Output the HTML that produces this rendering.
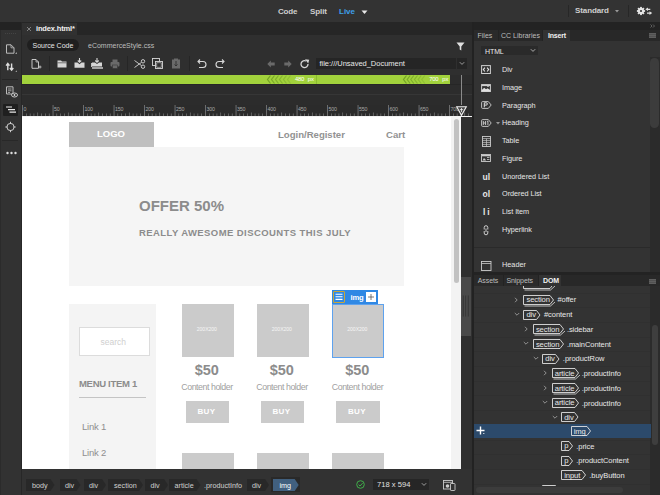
<!DOCTYPE html>
<html><head><meta charset="utf-8">
<style>
*{margin:0;padding:0;box-sizing:border-box}
html,body{width:660px;height:495px;overflow:hidden;background:#232323;font-family:"Liberation Sans",sans-serif;color:#ddd}
.a{position:absolute;overflow:visible}
.t{position:absolute;white-space:nowrap;line-height:1}
</style></head><body>
<div class="a" style="left:0;top:0;width:660px;height:22px;background:#333"></div>
<div class="t" style="left:278px;top:8.2px;font-size:8px;font-weight:bold;color:#cfcfcf;letter-spacing:-0.2px">Code</div>
<div class="t" style="left:310px;top:8.2px;font-size:8px;font-weight:bold;color:#cfcfcf;letter-spacing:-0.1px">Split</div>
<div class="t" style="left:339px;top:8.2px;font-size:8px;font-weight:bold;color:#3ea0ea;">Live</div>
<svg class="a" style="left:361px;top:10.2px;" width="7" height="5" viewBox="0 0 7 5"><path d="M0.5 0.5 L6.5 0.5 L3.5 4 Z" fill="#e8e8e8"/></svg>
<div class="a" style="left:568px;top:5px;width:1px;height:12px;background:#272727"></div>
<div class="t" style="left:575px;top:7px;font-size:8px;font-weight:bold;color:#cfcfcf;letter-spacing:-0.1px">Standard</div>
<svg class="a" style="left:615px;top:10px;" width="4" height="3" viewBox="0 0 4 3"><path d="M0 0 L4 0 L2 2.5 Z" fill="#999"/></svg>
<div class="a" style="left:628px;top:5px;width:1px;height:12px;background:#272727"></div>
<svg class="a" style="left:636.8px;top:6.9px;" width="16" height="9" viewBox="0 0 16 9"><g fill="#e6e6e6"><rect x="3.1" y="-0.1" width="1.8" height="8.2" transform="rotate(0 4 4)"/><rect x="3.1" y="-0.1" width="1.8" height="8.2" transform="rotate(45 4 4)"/><rect x="3.1" y="-0.1" width="1.8" height="8.2" transform="rotate(90 4 4)"/><rect x="3.1" y="-0.1" width="1.8" height="8.2" transform="rotate(135 4 4)"/><circle cx="4" cy="4" r="3"/></g><circle cx="4" cy="4" r="1.1" fill="#333"/>
<path d="M8.3 2.3 L11 0.5 V1.7 H13.3 V2.9 H11 V4.1 Z" fill="#e0e0e0"/><path d="M15.2 6.1 L12.5 4.3 V5.5 H10 V6.7 H12.5 V7.9 Z" fill="#e0e0e0"/></svg>
<div class="a" style="left:0;top:30px;width:20.5px;height:465px;background:#323232"></div>
<div class="a" style="left:0;top:30px;width:1px;height:465px;background:#2b2b2b"></div>
<div class="a" style="left:20.5px;top:22px;width:1.5px;height:473px;background:#272727"></div>
<svg class="a" style="left:5px;top:33px;" width="11" height="2" viewBox="0 0 11 2"><rect x="0" y="0" width="1" height="1" fill="#444"/><rect x="2" y="0" width="1" height="1" fill="#444"/><rect x="4" y="0" width="1" height="1" fill="#444"/><rect x="6" y="0" width="1" height="1" fill="#444"/><rect x="8" y="0" width="1" height="1" fill="#444"/><rect x="10" y="0" width="1" height="1" fill="#444"/></svg>
<svg class="a" style="left:5px;top:44px;" width="12" height="12" viewBox="0 0 12 12"><path d="M1.5 0.8 H6 L9 3.8 V9.2 H1.5 Z" fill="none" stroke="#bbb" stroke-width="1"/><path d="M6 0.8 V3.8 H9" fill="none" stroke="#bbb" stroke-width="0.8"/><path d="M10 10 L12 10 L12 8 Z" fill="#999"/></svg>
<svg class="a" style="left:5px;top:62px;" width="12" height="12" viewBox="0 0 12 12"><path d="M2.8 8.2 V2.2 M1.1 3.6 L2.8 1.4 L4.5 3.6" stroke="#ddd" stroke-width="1.4" fill="none"/><path d="M6.6 1.4 V7.4 M4.9 6 L6.6 8.2 L8.3 6" stroke="#ddd" stroke-width="1.4" fill="none"/><path d="M10.2 10 L12 10 L12 8.2 Z" fill="#999"/></svg>
<div class="a" style="left:2px;top:79px;width:16px;height:1px;background:#262626"></div>
<svg class="a" style="left:5px;top:86px;" width="13" height="12" viewBox="0 0 13 12"><path d="M1.5 0.8 H8 V8 H1.5 Z" fill="none" stroke="#bbb" stroke-width="1"/><path d="M3 3 H6.5 M3 4.8 H6.5 M3 6.5 H5" stroke="#bbb" stroke-width="0.8"/><ellipse cx="9.5" cy="9" rx="3" ry="2" fill="#2d2d2d" stroke="#ddd" stroke-width="0.9"/><circle cx="9.5" cy="9" r="0.9" fill="#ddd"/></svg>
<div class="a" style="left:3px;top:104px;width:15px;height:12px;background:#1f1f1f;border-radius:1px"></div>
<svg class="a" style="left:5px;top:105px;" width="12" height="10" viewBox="0 0 12 10"><path d="M1 2 H7 M3 4.6 H10 M4.5 7.2 H11" stroke="#e8e8e8" stroke-width="1.2"/></svg>
<svg class="a" style="left:5px;top:121px;" width="12" height="12" viewBox="0 0 12 12"><circle cx="5.5" cy="6" r="3.6" fill="none" stroke="#ccc" stroke-width="1"/><path d="M5.5 0.8 V3 M5.5 9 V11.2 M0.3 6 H2.5 M8.5 6 H10.7" stroke="#ccc" stroke-width="1"/></svg>
<div class="a" style="left:2px;top:140px;width:16px;height:1px;background:#282828"></div>
<svg class="a" style="left:6px;top:151px;" width="11" height="4" viewBox="0 0 11 4"><circle cx="1.5" cy="2" r="1.2" fill="#ddd"/><circle cx="5.5" cy="2" r="1.2" fill="#ddd"/><circle cx="9.5" cy="2" r="1.2" fill="#ddd"/></svg>
<div class="a" style="left:22px;top:22px;width:450px;height:13px;background:#262626"></div>
<div class="a" style="left:22px;top:23px;width:55px;height:12px;background:#313131"></div>
<svg class="a" style="left:25.8px;top:25.8px;" width="6" height="6" viewBox="0 0 6 6"><path d="M1 1 L5 5 M5 1 L1 5" stroke="#8a8a8a" stroke-width="0.9"/></svg>
<div class="t" style="left:36px;top:25.3px;font-size:7.5px;font-weight:bold;color:#f0f0f0;letter-spacing:-0.15px">index.html*</div>
<div class="a" style="left:22px;top:35px;width:450px;height:40px;background:#2f2f2f"></div>
<div class="a" style="left:27px;top:39px;width:52px;height:12px;border-radius:6px;background:#1f1f1f"></div>
<div class="t" style="left:32.5px;top:41.5px;font-size:7px;font-weight:normal;color:#e6e6e6;">Source Code</div>
<div class="t" style="left:88px;top:41.5px;font-size:7px;font-weight:normal;color:#bdbdbd;">eCommerceStyle.css</div>
<svg class="a" style="left:456px;top:42px;" width="9" height="9" viewBox="0 0 9 9"><path d="M0.5 0.5 H8.5 L5.3 4.5 V8.5 L3.7 7.5 V4.5 Z" fill="#e0e0e0"/></svg>
<svg class="a" style="left:31px;top:59px;" width="11" height="10" viewBox="0 0 11 10"><path d="M1 0.5 H5 L7.5 3 V9.3 H1 Z" fill="none" stroke="#d6d6d6" stroke-width="0.9"/><path d="M5 0.5 V3 H7.5" fill="none" stroke="#d6d6d6" stroke-width="0.7"/><path d="M9 6.5 V9.5 M7.5 8 H10.5" stroke="#d6d6d6" stroke-width="0.8"/></svg>
<div class="a" style="left:49px;top:56px;width:1px;height:15px;background:#262626"></div>
<svg class="a" style="left:57px;top:60px;" width="10" height="8" viewBox="0 0 10 8"><path d="M0.5 0.5 H4 L5 1.5 H9.5 V7.5 H0.5 Z" fill="#d6d6d6"/><path d="M0.5 2.8 H9.5" stroke="#2f2f2f" stroke-width="0.6"/></svg>
<svg class="a" style="left:74px;top:58px;" width="11" height="10" viewBox="0 0 11 10"><path d="M5.5 0 V4 M3.8 2.5 L5.5 4.3 L7.2 2.5" stroke="#d6d6d6" stroke-width="1.1" fill="none"/><path d="M0.5 4.5 H3.5 L5.5 6.2 L7.5 4.5 H10.5 V9.8 H0.5 Z" fill="#d6d6d6"/></svg>
<svg class="a" style="left:91px;top:58px;" width="12" height="11" viewBox="0 0 12 11"><path d="M6 0 V4 M4.3 2.5 L6 4.3 L7.7 2.5" stroke="#d6d6d6" stroke-width="1.1" fill="none"/><path d="M1 4.5 H4 L6 6 L8 4.5 H11 V8.5 H1 Z" fill="#d6d6d6"/><rect x="1" y="9.3" width="11" height="1.4" fill="#d6d6d6"/><rect x="0" y="5" width="0.9" height="4" fill="#d6d6d6"/></svg>
<svg class="a" style="left:110px;top:59px;" width="10" height="10" viewBox="0 0 10 10"><rect x="2.5" y="0.5" width="5" height="2.5" fill="#6a6a6a"/><rect x="0.5" y="3" width="9" height="4.5" rx="1" fill="#6a6a6a"/><rect x="2.5" y="6" width="5" height="3.5" fill="#6a6a6a" stroke="#2f2f2f" stroke-width="0.5"/></svg>
<div class="a" style="left:127px;top:56px;width:1px;height:15px;background:#262626"></div>
<svg class="a" style="left:134px;top:59px;" width="12" height="10" viewBox="0 0 12 10"><circle cx="9" cy="2.3" r="1.7" fill="none" stroke="#d6d6d6" stroke-width="0.9"/><circle cx="9" cy="7.7" r="1.7" fill="none" stroke="#d6d6d6" stroke-width="0.9"/><path d="M0.5 1.5 L7.5 6.6 M0.5 8.5 L7.5 3.4" stroke="#d6d6d6" stroke-width="0.9"/></svg>
<svg class="a" style="left:152px;top:58px;" width="12" height="11" viewBox="0 0 12 11"><rect x="0.5" y="0.5" width="7" height="7" fill="none" stroke="#d6d6d6" stroke-width="0.9"/><rect x="3.5" y="3.5" width="7" height="7" fill="#2f2f2f" stroke="#d6d6d6" stroke-width="0.9"/><rect x="4.8" y="4.8" width="4.4" height="4.4" fill="none" stroke="#d6d6d6" stroke-width="0.6"/></svg>
<svg class="a" style="left:171px;top:58px;" width="10" height="11" viewBox="0 0 10 11"><path d="M1 1.5 H3 V0.5 H7 V1.5 H9 V10.5 H1 Z" fill="#6a6a6a"/><path d="M5 3 V8 M3.5 6.5 L5 8 L6.5 6.5" stroke="#2f2f2f" stroke-width="0.9" fill="none"/></svg>
<div class="a" style="left:189px;top:56px;width:1px;height:15px;background:#262626"></div>
<svg class="a" style="left:197px;top:59px;" width="10" height="10" viewBox="0 0 10 10"><path d="M1 2.5 H6 A3 3 0 0 1 6 8.5 H2" stroke="#d6d6d6" stroke-width="1.1" fill="none"/><path d="M3 0.5 L1 2.5 L3 4.5" stroke="#d6d6d6" stroke-width="1.1" fill="none"/></svg>
<svg class="a" style="left:215px;top:59px;" width="10" height="10" viewBox="0 0 10 10"><path d="M9 2.5 H4 A3 3 0 0 0 4 8.5 H8" stroke="#d6d6d6" stroke-width="1.1" fill="none"/><path d="M7 0.5 L9 2.5 L7 4.5" stroke="#d6d6d6" stroke-width="1.1" fill="none"/></svg>
<svg class="a" style="left:267px;top:60px;" width="8" height="8" viewBox="0 0 8 8"><path d="M0.3 4 L3.8 0.6 V2.6 H7.7 V5.4 H3.8 V7.4 Z" fill="#6a6a6a"/></svg>
<svg class="a" style="left:283.5px;top:60px;" width="8" height="8" viewBox="0 0 8 8"><path d="M7.7 4 L4.2 0.6 V2.6 H0.3 V5.4 H4.2 V7.4 Z" fill="#6a6a6a"/></svg>
<svg class="a" style="left:299.5px;top:59px;" width="10" height="10" viewBox="0 0 10 10"><path d="M8 5 A3.5 3.5 0 1 1 6.2 2" stroke="#d6d6d6" stroke-width="1.3" fill="none"/><path d="M5 0.3 L9.2 0.8 L8.2 4.5 Z" fill="#d6d6d6"/></svg>
<div class="a" style="left:316px;top:58px;width:140px;height:11px;background:#252525"></div>
<div class="a" style="left:457px;top:58px;width:10px;height:11px;background:#252525"></div>
<div class="t" style="left:319.5px;top:60px;font-size:7.5px;font-weight:normal;color:#e8e8e8;letter-spacing:-0.02px">file:///Unsaved_Document</div>
<svg class="a" style="left:459px;top:61px;" width="6" height="5" viewBox="0 0 6 5"><path d="M0.8 1.2 L3 3.4 L5.2 1.2" stroke="#bbb" stroke-width="0.8" fill="none"/></svg>
<div class="a" style="left:22px;top:75px;width:450px;height:30px;background:#2c2c2c"></div>
<div class="a" style="left:22px;top:84px;width:450px;height:1px;background:#262626"></div>
<div class="a" style="left:22px;top:94px;width:450px;height:1px;background:#363636"></div>
<div class="a" style="left:22px;top:75px;width:428px;height:9px;background:#a2d23c"></div>
<svg class="a" style="left:267px;top:75px;" width="28" height="9" viewBox="0 0 28 9"><path d="M3.5 0.5 L0.5 4.5 L3.5 8.5" stroke="#74a326" stroke-opacity="1.00" stroke-width="1.2" fill="none"/><path d="M7.5 0.5 L4.5 4.5 L7.5 8.5" stroke="#74a326" stroke-opacity="0.87" stroke-width="1.2" fill="none"/><path d="M11.5 0.5 L8.5 4.5 L11.5 8.5" stroke="#74a326" stroke-opacity="0.74" stroke-width="1.2" fill="none"/><path d="M15.5 0.5 L12.5 4.5 L15.5 8.5" stroke="#74a326" stroke-opacity="0.61" stroke-width="1.2" fill="none"/><path d="M19.5 0.5 L16.5 4.5 L19.5 8.5" stroke="#74a326" stroke-opacity="0.48" stroke-width="1.2" fill="none"/><path d="M23.5 0.5 L20.5 4.5 L23.5 8.5" stroke="#74a326" stroke-opacity="0.35" stroke-width="1.2" fill="none"/></svg>
<div class="t" style="left:295px;top:76.9px;font-size:5.9px;font-weight:normal;color:#fff;letter-spacing:-0.3px">480</div>
<div class="t" style="left:307.7px;top:76.9px;font-size:5.9px;font-weight:normal;color:#fff;">px</div>
<div class="a" style="left:315.5px;top:75px;width:0.6px;height:9px;background:#8cbc30"></div>
<svg class="a" style="left:403px;top:75px;" width="26" height="9" viewBox="0 0 26 9"><path d="M3.5 0.5 L0.5 4.5 L3.5 8.5" stroke="#74a326" stroke-opacity="1.00" stroke-width="1.2" fill="none"/><path d="M7.2 0.5 L4.2 4.5 L7.2 8.5" stroke="#74a326" stroke-opacity="0.87" stroke-width="1.2" fill="none"/><path d="M10.8 0.5 L7.8 4.5 L10.8 8.5" stroke="#74a326" stroke-opacity="0.74" stroke-width="1.2" fill="none"/><path d="M14.5 0.5 L11.5 4.5 L14.5 8.5" stroke="#74a326" stroke-opacity="0.61" stroke-width="1.2" fill="none"/><path d="M18.2 0.5 L15.2 4.5 L18.2 8.5" stroke="#74a326" stroke-opacity="0.48" stroke-width="1.2" fill="none"/><path d="M21.8 0.5 L18.8 4.5 L21.8 8.5" stroke="#74a326" stroke-opacity="0.35" stroke-width="1.2" fill="none"/></svg>
<div class="t" style="left:429.3px;top:76.9px;font-size:5.9px;font-weight:normal;color:#fff;letter-spacing:-0.3px">700</div>
<div class="t" style="left:442.3px;top:76.9px;font-size:5.9px;font-weight:normal;color:#fff;">px</div>
<div class="a" style="left:460.5px;top:75px;width:1px;height:31px;background:#8a8a8a"></div>
<div class="a" style="left:22px;top:104.5px;width:450px;height:11.5px;background:#2b2b2b"></div>
<svg class="a" style="left:22px;top:104.5px;" width="450" height="11" viewBox="0 0 450 11"><rect x="0.20" y="0" width="0.7" height="11" fill="#8a8a8a"/><text x="1.40" y="6" font-size="5.3" fill="#a8a8a8" font-family="Liberation Sans" letter-spacing="-0.2">0</text><rect x="4.01" y="8.5" width="0.6" height="2.5" fill="#888"/><rect x="7.83" y="8.5" width="0.6" height="2.5" fill="#888"/><rect x="11.64" y="8.5" width="0.6" height="2.5" fill="#888"/><rect x="15.45" y="7.5" width="0.6" height="3.5" fill="#888"/><rect x="19.26" y="8.5" width="0.6" height="2.5" fill="#888"/><rect x="23.07" y="8.5" width="0.6" height="2.5" fill="#888"/><rect x="26.89" y="8.5" width="0.6" height="2.5" fill="#888"/><rect x="30.70" y="0" width="0.7" height="11" fill="#8a8a8a"/><text x="31.90" y="6" font-size="5.3" fill="#a8a8a8" font-family="Liberation Sans" letter-spacing="-0.2">50</text><rect x="34.51" y="8.5" width="0.6" height="2.5" fill="#888"/><rect x="38.33" y="8.5" width="0.6" height="2.5" fill="#888"/><rect x="42.14" y="8.5" width="0.6" height="2.5" fill="#888"/><rect x="45.95" y="7.5" width="0.6" height="3.5" fill="#888"/><rect x="49.76" y="8.5" width="0.6" height="2.5" fill="#888"/><rect x="53.58" y="8.5" width="0.6" height="2.5" fill="#888"/><rect x="57.39" y="8.5" width="0.6" height="2.5" fill="#888"/><rect x="61.20" y="0" width="0.7" height="11" fill="#8a8a8a"/><text x="62.40" y="6" font-size="5.3" fill="#a8a8a8" font-family="Liberation Sans" letter-spacing="-0.2">100</text><rect x="65.01" y="8.5" width="0.6" height="2.5" fill="#888"/><rect x="68.83" y="8.5" width="0.6" height="2.5" fill="#888"/><rect x="72.64" y="8.5" width="0.6" height="2.5" fill="#888"/><rect x="76.45" y="7.5" width="0.6" height="3.5" fill="#888"/><rect x="80.26" y="8.5" width="0.6" height="2.5" fill="#888"/><rect x="84.08" y="8.5" width="0.6" height="2.5" fill="#888"/><rect x="87.89" y="8.5" width="0.6" height="2.5" fill="#888"/><rect x="91.70" y="0" width="0.7" height="11" fill="#8a8a8a"/><text x="92.90" y="6" font-size="5.3" fill="#a8a8a8" font-family="Liberation Sans" letter-spacing="-0.2">150</text><rect x="95.51" y="8.5" width="0.6" height="2.5" fill="#888"/><rect x="99.33" y="8.5" width="0.6" height="2.5" fill="#888"/><rect x="103.14" y="8.5" width="0.6" height="2.5" fill="#888"/><rect x="106.95" y="7.5" width="0.6" height="3.5" fill="#888"/><rect x="110.76" y="8.5" width="0.6" height="2.5" fill="#888"/><rect x="114.58" y="8.5" width="0.6" height="2.5" fill="#888"/><rect x="118.39" y="8.5" width="0.6" height="2.5" fill="#888"/><rect x="122.20" y="0" width="0.7" height="11" fill="#8a8a8a"/><text x="123.40" y="6" font-size="5.3" fill="#a8a8a8" font-family="Liberation Sans" letter-spacing="-0.2">200</text><rect x="126.01" y="8.5" width="0.6" height="2.5" fill="#888"/><rect x="129.82" y="8.5" width="0.6" height="2.5" fill="#888"/><rect x="133.64" y="8.5" width="0.6" height="2.5" fill="#888"/><rect x="137.45" y="7.5" width="0.6" height="3.5" fill="#888"/><rect x="141.26" y="8.5" width="0.6" height="2.5" fill="#888"/><rect x="145.07" y="8.5" width="0.6" height="2.5" fill="#888"/><rect x="148.89" y="8.5" width="0.6" height="2.5" fill="#888"/><rect x="152.70" y="0" width="0.7" height="11" fill="#8a8a8a"/><text x="153.90" y="6" font-size="5.3" fill="#a8a8a8" font-family="Liberation Sans" letter-spacing="-0.2">250</text><rect x="156.51" y="8.5" width="0.6" height="2.5" fill="#888"/><rect x="160.32" y="8.5" width="0.6" height="2.5" fill="#888"/><rect x="164.14" y="8.5" width="0.6" height="2.5" fill="#888"/><rect x="167.95" y="7.5" width="0.6" height="3.5" fill="#888"/><rect x="171.76" y="8.5" width="0.6" height="2.5" fill="#888"/><rect x="175.57" y="8.5" width="0.6" height="2.5" fill="#888"/><rect x="179.39" y="8.5" width="0.6" height="2.5" fill="#888"/><rect x="183.20" y="0" width="0.7" height="11" fill="#8a8a8a"/><text x="184.40" y="6" font-size="5.3" fill="#a8a8a8" font-family="Liberation Sans" letter-spacing="-0.2">300</text><rect x="187.01" y="8.5" width="0.6" height="2.5" fill="#888"/><rect x="190.82" y="8.5" width="0.6" height="2.5" fill="#888"/><rect x="194.64" y="8.5" width="0.6" height="2.5" fill="#888"/><rect x="198.45" y="7.5" width="0.6" height="3.5" fill="#888"/><rect x="202.26" y="8.5" width="0.6" height="2.5" fill="#888"/><rect x="206.07" y="8.5" width="0.6" height="2.5" fill="#888"/><rect x="209.89" y="8.5" width="0.6" height="2.5" fill="#888"/><rect x="213.70" y="0" width="0.7" height="11" fill="#8a8a8a"/><text x="214.90" y="6" font-size="5.3" fill="#a8a8a8" font-family="Liberation Sans" letter-spacing="-0.2">350</text><rect x="217.51" y="8.5" width="0.6" height="2.5" fill="#888"/><rect x="221.32" y="8.5" width="0.6" height="2.5" fill="#888"/><rect x="225.14" y="8.5" width="0.6" height="2.5" fill="#888"/><rect x="228.95" y="7.5" width="0.6" height="3.5" fill="#888"/><rect x="232.76" y="8.5" width="0.6" height="2.5" fill="#888"/><rect x="236.57" y="8.5" width="0.6" height="2.5" fill="#888"/><rect x="240.39" y="8.5" width="0.6" height="2.5" fill="#888"/><rect x="244.20" y="0" width="0.7" height="11" fill="#8a8a8a"/><text x="245.40" y="6" font-size="5.3" fill="#a8a8a8" font-family="Liberation Sans" letter-spacing="-0.2">400</text><rect x="248.01" y="8.5" width="0.6" height="2.5" fill="#888"/><rect x="251.82" y="8.5" width="0.6" height="2.5" fill="#888"/><rect x="255.64" y="8.5" width="0.6" height="2.5" fill="#888"/><rect x="259.45" y="7.5" width="0.6" height="3.5" fill="#888"/><rect x="263.26" y="8.5" width="0.6" height="2.5" fill="#888"/><rect x="267.07" y="8.5" width="0.6" height="2.5" fill="#888"/><rect x="270.89" y="8.5" width="0.6" height="2.5" fill="#888"/><rect x="274.70" y="0" width="0.7" height="11" fill="#8a8a8a"/><text x="275.90" y="6" font-size="5.3" fill="#a8a8a8" font-family="Liberation Sans" letter-spacing="-0.2">450</text><rect x="278.51" y="8.5" width="0.6" height="2.5" fill="#888"/><rect x="282.32" y="8.5" width="0.6" height="2.5" fill="#888"/><rect x="286.14" y="8.5" width="0.6" height="2.5" fill="#888"/><rect x="289.95" y="7.5" width="0.6" height="3.5" fill="#888"/><rect x="293.76" y="8.5" width="0.6" height="2.5" fill="#888"/><rect x="297.57" y="8.5" width="0.6" height="2.5" fill="#888"/><rect x="301.39" y="8.5" width="0.6" height="2.5" fill="#888"/><rect x="305.20" y="0" width="0.7" height="11" fill="#8a8a8a"/><text x="306.40" y="6" font-size="5.3" fill="#a8a8a8" font-family="Liberation Sans" letter-spacing="-0.2">500</text><rect x="309.01" y="8.5" width="0.6" height="2.5" fill="#888"/><rect x="312.82" y="8.5" width="0.6" height="2.5" fill="#888"/><rect x="316.64" y="8.5" width="0.6" height="2.5" fill="#888"/><rect x="320.45" y="7.5" width="0.6" height="3.5" fill="#888"/><rect x="324.26" y="8.5" width="0.6" height="2.5" fill="#888"/><rect x="328.07" y="8.5" width="0.6" height="2.5" fill="#888"/><rect x="331.89" y="8.5" width="0.6" height="2.5" fill="#888"/><rect x="335.70" y="0" width="0.7" height="11" fill="#8a8a8a"/><text x="336.90" y="6" font-size="5.3" fill="#a8a8a8" font-family="Liberation Sans" letter-spacing="-0.2">550</text><rect x="339.51" y="8.5" width="0.6" height="2.5" fill="#888"/><rect x="343.32" y="8.5" width="0.6" height="2.5" fill="#888"/><rect x="347.14" y="8.5" width="0.6" height="2.5" fill="#888"/><rect x="350.95" y="7.5" width="0.6" height="3.5" fill="#888"/><rect x="354.76" y="8.5" width="0.6" height="2.5" fill="#888"/><rect x="358.57" y="8.5" width="0.6" height="2.5" fill="#888"/><rect x="362.39" y="8.5" width="0.6" height="2.5" fill="#888"/><rect x="366.20" y="0" width="0.7" height="11" fill="#8a8a8a"/><text x="367.40" y="6" font-size="5.3" fill="#a8a8a8" font-family="Liberation Sans" letter-spacing="-0.2">600</text><rect x="370.01" y="8.5" width="0.6" height="2.5" fill="#888"/><rect x="373.82" y="8.5" width="0.6" height="2.5" fill="#888"/><rect x="377.64" y="8.5" width="0.6" height="2.5" fill="#888"/><rect x="381.45" y="7.5" width="0.6" height="3.5" fill="#888"/><rect x="385.26" y="8.5" width="0.6" height="2.5" fill="#888"/><rect x="389.07" y="8.5" width="0.6" height="2.5" fill="#888"/><rect x="392.89" y="8.5" width="0.6" height="2.5" fill="#888"/><rect x="396.70" y="0" width="0.7" height="11" fill="#8a8a8a"/><text x="397.90" y="6" font-size="5.3" fill="#a8a8a8" font-family="Liberation Sans" letter-spacing="-0.2">650</text><rect x="400.51" y="8.5" width="0.6" height="2.5" fill="#888"/><rect x="404.32" y="8.5" width="0.6" height="2.5" fill="#888"/><rect x="408.14" y="8.5" width="0.6" height="2.5" fill="#888"/><rect x="411.95" y="7.5" width="0.6" height="3.5" fill="#888"/><rect x="415.76" y="8.5" width="0.6" height="2.5" fill="#888"/><rect x="419.57" y="8.5" width="0.6" height="2.5" fill="#888"/><rect x="423.39" y="8.5" width="0.6" height="2.5" fill="#888"/><rect x="427.20" y="0" width="0.7" height="11" fill="#8a8a8a"/><text x="428.40" y="6" font-size="5.3" fill="#a8a8a8" font-family="Liberation Sans" letter-spacing="-0.2">700</text><rect x="431.01" y="8.5" width="0.6" height="2.5" fill="#888"/><rect x="434.82" y="8.5" width="0.6" height="2.5" fill="#888"/><rect x="438.64" y="8.5" width="0.6" height="2.5" fill="#888"/><rect x="442.45" y="7.5" width="0.6" height="3.5" fill="#888"/><rect x="446.26" y="8.5" width="0.6" height="2.5" fill="#888"/></svg>
<svg class="a" style="left:455.5px;top:105.5px;" width="12" height="10" viewBox="0 0 12 10"><path d="M0.7 0.7 H10.3 L5.5 9.3 Z" fill="#444" stroke="#eee" stroke-width="1.1"/><path d="M5.5 2 V6 M3.8 3.6 H7.2" stroke="#eee" stroke-width="0.8"/></svg>
<div class="a" style="left:22px;top:116px;width:450px;height:353px;background:#2f2f2f"></div>
<div class="a" style="left:22px;top:115.5px;width:450px;height:1.5px;background:#f2f2f2"></div>
<div class="a" style="left:22px;top:117px;width:429px;height:352px;background:#fff"></div>
<div class="a" style="left:451px;top:117px;width:10px;height:352px;background:#f3f3f3"></div>
<div class="a" style="left:454px;top:119px;width:5.2px;height:164px;border-radius:2.6px;background:#c2c2c2"></div>
<div class="a" style="left:461.4px;top:276.5px;width:10px;height:59px;background:#494949"></div>
<svg class="a" style="left:462px;top:295px;" width="8" height="22" viewBox="0 0 8 22"><path d="M1.3 0.5 V21.5 M3.6 0.5 V21.5 M6.3 0.5 V21.5" stroke="#2e2e2e" stroke-width="0.7"/></svg>
<div class="a" style="left:69px;top:122px;width:85px;height:25px;background:#bfbfbf"></div>
<div class="t" style="left:97px;top:129.2px;font-size:9.5px;font-weight:bold;color:#fff;letter-spacing:0px">LOGO</div>
<div class="t" style="left:278px;top:130px;font-size:9.6px;font-weight:bold;color:#929292;letter-spacing:-0.02px">Login/Register</div>
<div class="t" style="left:386px;top:130px;font-size:9.6px;font-weight:bold;color:#929292;letter-spacing:0px">Cart</div>
<div class="a" style="left:69px;top:147px;width:335.3px;height:138.6px;background:#f5f5f5"></div>
<div class="t" style="left:139px;top:198px;font-size:15px;font-weight:bold;color:#8c8c8c;">OFFER 50%</div>
<div class="t" style="left:139px;top:228px;font-size:9.5px;font-weight:bold;color:#8c8c8c;letter-spacing:0.42px">REALLY AWESOME DISCOUNTS THIS JULY</div>
<div class="a" style="left:69px;top:304px;width:87px;height:165px;background:#f4f4f4"></div>
<div class="a" style="left:79px;top:327px;width:71px;height:29px;background:#fff;border:1px solid #dcdcdc"></div>
<div class="t" style="left:100.5px;top:337.5px;font-size:8.5px;font-weight:normal;color:#cfcfcf;letter-spacing:0px">search</div>
<div class="t" style="left:79px;top:378.5px;font-size:9.5px;font-weight:bold;color:#8c8c8c;letter-spacing:-0.3px">MENU ITEM 1</div>
<div class="a" style="left:78.5px;top:397px;width:67px;height:1px;background:#c4c4c4"></div>
<div class="t" style="left:82px;top:421.5px;font-size:9.5px;font-weight:normal;color:#8f8f8f;letter-spacing:-0.2px">Link 1</div>
<div class="t" style="left:82px;top:448px;font-size:9.5px;font-weight:normal;color:#8f8f8f;letter-spacing:-0.2px">Link 2</div>
<div class="a" style="left:181.5px;top:304px;width:52px;height:53px;background:#cbcbcb"></div>
<div class="t" style="left:196.8px;top:327.3px;font-size:5.1px;font-weight:normal;color:#f6f6f6;letter-spacing:-0.05px">200X200</div>
<div class="t" style="left:194.8px;top:362.8px;font-size:14.5px;font-weight:bold;color:#8c8c8c;letter-spacing:-0.1px">$50</div>
<div class="t" style="left:181.3px;top:383.3px;font-size:8.8px;font-weight:normal;color:#a0a0a0;letter-spacing:-0.45px">Content holder</div>
<div class="a" style="left:185.5px;top:401px;width:43.5px;height:21.7px;background:#cbcbcb"></div>
<div class="t" style="left:197.5px;top:408px;font-size:8px;font-weight:bold;color:#fff;letter-spacing:0.3px">BUY</div>
<div class="a" style="left:181.5px;top:453px;width:52px;height:16px;background:#cbcbcb"></div>
<div class="a" style="left:256.5px;top:304px;width:52px;height:53px;background:#cbcbcb"></div>
<div class="t" style="left:271.8px;top:327.3px;font-size:5.1px;font-weight:normal;color:#f6f6f6;letter-spacing:-0.05px">200X200</div>
<div class="t" style="left:269.8px;top:362.8px;font-size:14.5px;font-weight:bold;color:#8c8c8c;letter-spacing:-0.1px">$50</div>
<div class="t" style="left:256.3px;top:383.3px;font-size:8.8px;font-weight:normal;color:#a0a0a0;letter-spacing:-0.45px">Content holder</div>
<div class="a" style="left:260.5px;top:401px;width:43.5px;height:21.7px;background:#cbcbcb"></div>
<div class="t" style="left:272.5px;top:408px;font-size:8px;font-weight:bold;color:#fff;letter-spacing:0.3px">BUY</div>
<div class="a" style="left:256.5px;top:453px;width:52px;height:16px;background:#cbcbcb"></div>
<div class="a" style="left:332px;top:304px;width:52px;height:53px;background:#cbcbcb"></div>
<div class="t" style="left:347.3px;top:327.3px;font-size:5.1px;font-weight:normal;color:#f6f6f6;letter-spacing:-0.05px">200X200</div>
<div class="t" style="left:345.3px;top:362.8px;font-size:14.5px;font-weight:bold;color:#8c8c8c;letter-spacing:-0.1px">$50</div>
<div class="t" style="left:331.8px;top:383.3px;font-size:8.8px;font-weight:normal;color:#a0a0a0;letter-spacing:-0.45px">Content holder</div>
<div class="a" style="left:336px;top:401px;width:43.5px;height:21.7px;background:#cbcbcb"></div>
<div class="t" style="left:348px;top:408px;font-size:8px;font-weight:bold;color:#fff;letter-spacing:0.3px">BUY</div>
<div class="a" style="left:332px;top:453px;width:52px;height:16px;background:#cbcbcb"></div>
<div class="a" style="left:331.5px;top:303.5px;width:52.5px;height:54px;border:1px solid #5ea2ee"></div>
<div class="a" style="left:331.5px;top:290px;width:46.5px;height:14px;background:#2f88e4"></div>
<div class="a" style="left:333px;top:291px;width:12px;height:11.5px;border:1px solid #c9a73a;border-radius:1px"></div>
<svg class="a" style="left:335px;top:293px;" width="8" height="8" viewBox="0 0 8 8"><path d="M0.5 1.2 H7.5 M0.5 3.8 H7.5 M0.5 6.4 H7.5" stroke="#fff" stroke-width="1.1"/></svg>
<div class="t" style="left:350.5px;top:293.5px;font-size:7.6px;font-weight:bold;color:#fff;letter-spacing:-0.2px">img</div>
<div class="a" style="left:366px;top:292px;width:10px;height:10px;background:#fff"></div>
<svg class="a" style="left:367px;top:293px;" width="8" height="8" viewBox="0 0 8 8"><path d="M4 1 V7 M1 4 H7" stroke="#555" stroke-width="0.8"/></svg>
<div class="a" style="left:22px;top:469px;width:450px;height:26px;background:#323232"></div>
<svg class="a" style="left:26px;top:479px;" width="28.5" height="12" viewBox="0 0 28.5 12"><path d="M0 0 H24.5 L28.5 6 L24.5 12 H0 Z" fill="#282828"/></svg>
<div class="t" style="left:32px;top:481.5px;font-size:7.2px;font-weight:normal;color:#d0d0d0;">body</div>
<svg class="a" style="left:59.5px;top:479px;" width="20.5" height="12" viewBox="0 0 20.5 12"><path d="M0 0 H16.5 L20.5 6 L16.5 12 H0 Z" fill="#282828"/></svg>
<div class="t" style="left:65px;top:481.5px;font-size:7.2px;font-weight:normal;color:#d0d0d0;">div</div>
<svg class="a" style="left:83.5px;top:479px;" width="22.0" height="12" viewBox="0 0 22.0 12"><path d="M0 0 H18.0 L22.0 6 L18.0 12 H0 Z" fill="#282828"/></svg>
<div class="t" style="left:89px;top:481.5px;font-size:7.2px;font-weight:normal;color:#d0d0d0;">div</div>
<svg class="a" style="left:108px;top:479px;" width="35" height="12" viewBox="0 0 35 12"><path d="M0 0 H31 L35 6 L31 12 H0 Z" fill="#282828"/></svg>
<div class="t" style="left:114px;top:481.5px;font-size:7.2px;font-weight:normal;color:#d0d0d0;">section</div>
<svg class="a" style="left:145px;top:479px;" width="23" height="12" viewBox="0 0 23 12"><path d="M0 0 H19 L23 6 L19 12 H0 Z" fill="#282828"/></svg>
<div class="t" style="left:150.5px;top:481.5px;font-size:7.2px;font-weight:normal;color:#d0d0d0;">div</div>
<svg class="a" style="left:169px;top:479px;" width="31.5" height="12" viewBox="0 0 31.5 12"><path d="M0 0 H27.5 L31.5 6 L27.5 12 H0 Z" fill="#282828"/></svg>
<div class="t" style="left:174.5px;top:481.5px;font-size:7.2px;font-weight:normal;color:#d0d0d0;">article</div>
<div class="t" style="left:204px;top:481.5px;font-size:7.2px;font-weight:normal;color:#d0d0d0;">.productInfo</div>
<svg class="a" style="left:246.5px;top:479px;" width="22.0" height="12" viewBox="0 0 22.0 12"><path d="M0 0 H18.0 L22.0 6 L18.0 12 H0 Z" fill="#282828"/></svg>
<div class="t" style="left:252px;top:481.5px;font-size:7.2px;font-weight:normal;color:#d0d0d0;">div</div>
<div class="a" style="left:271px;top:476.5px;width:29px;height:15.5px;background:#292929"></div>
<svg class="a" style="left:272.5px;top:479px;" width="25.69999999999999" height="12" viewBox="0 0 25.69999999999999 12"><path d="M0 0 H21.69999999999999 L25.69999999999999 6 L21.69999999999999 12 H0 Z" fill="#41607f"/></svg>
<div class="t" style="left:279.5px;top:481.5px;font-size:7.2px;font-weight:normal;color:#fff;">img</div>
<svg class="a" style="left:356px;top:479.5px;" width="9" height="9" viewBox="0 0 9 9"><circle cx="4.5" cy="4.5" r="3.8" fill="none" stroke="#3fae49" stroke-width="1"/><path d="M2.6 4.6 L4 6 L6.6 3.2" stroke="#3fae49" stroke-width="1" fill="none"/></svg>
<div class="a" style="left:373px;top:478.5px;width:56px;height:11.5px;background:#262626"></div>
<div class="t" style="left:377px;top:481px;font-size:7.6px;font-weight:normal;color:#e0e0e0;">718 x 594</div>
<svg class="a" style="left:421px;top:482px;" width="6" height="5" viewBox="0 0 6 5"><path d="M0.8 1.2 L3 3.4 L5.2 1.2" stroke="#bbb" stroke-width="0.8" fill="none"/></svg>
<svg class="a" style="left:443px;top:479.5px;" width="13" height="11" viewBox="0 0 13 11"><rect x="0.5" y="0.5" width="9" height="8.5" fill="none" stroke="#ccc" stroke-width="0.9"/><path d="M0.5 2.3 H9.5" stroke="#ccc" stroke-width="0.8"/><rect x="7.5" y="3.5" width="4.5" height="7" rx="0.6" fill="#323232" stroke="#ccc" stroke-width="0.9"/><circle cx="4.5" cy="6" r="1.8" fill="#ccc"/></svg>
<div class="a" style="left:472px;top:22px;width:2px;height:473px;background:#222"></div>
<div class="a" style="left:474px;top:22px;width:186px;height:8px;background:#232323"></div>
<svg class="a" style="left:650px;top:24px;" width="6" height="4" viewBox="0 0 6 4"><path d="M0.5 0.5 L2 2 L0.5 3.5 M3 0.5 L4.5 2 L3 3.5" stroke="#888" stroke-width="0.6" fill="none"/></svg>
<div class="a" style="left:474px;top:30px;width:186px;height:11px;background:#282828"></div>
<div class="a" style="left:474px;top:30px;width:24px;height:11px;background:#2a2a2a"></div>
<div class="a" style="left:498px;top:30px;width:1px;height:11px;background:#232323"></div>
<div class="a" style="left:542px;top:30px;width:1px;height:11px;background:#232323"></div>
<div class="a" style="left:543px;top:30px;width:27px;height:11px;background:#333"></div>
<div class="t" style="left:477.5px;top:32px;font-size:7px;font-weight:normal;color:#bdbdbd;">Files</div>
<div class="t" style="left:501px;top:32px;font-size:7px;font-weight:normal;color:#bdbdbd;">CC Libraries</div>
<div class="t" style="left:548px;top:32px;font-size:7px;font-weight:bold;color:#f2f2f2;letter-spacing:-0.2px">Insert</div>
<svg class="a" style="left:649px;top:33px;" width="7" height="5" viewBox="0 0 7 5"><rect x="0" y="0" width="7" height="5" fill="#5e5e5e"/><rect x="0" y="1.5" width="7" height="0.5" fill="#444"/><rect x="0" y="3.2" width="7" height="0.5" fill="#444"/></svg>
<div class="a" style="left:474px;top:41px;width:186px;height:231px;background:#333"></div>
<div class="a" style="left:481px;top:45.5px;width:56.5px;height:9.5px;background:#2a2a2a"></div>
<div class="t" style="left:485px;top:47.5px;font-size:7px;font-weight:normal;color:#eaeaea;letter-spacing:-0.1px">HTML</div>
<svg class="a" style="left:530px;top:48px;" width="6" height="5" viewBox="0 0 6 5"><path d="M0.8 1.2 L3 3.4 L5.2 1.2" stroke="#ccc" stroke-width="0.8" fill="none"/></svg>
<div class="a" style="left:649.5px;top:57px;width:10.5px;height:215px;background:#2b2b2b"></div>
<div class="a" style="left:650px;top:58px;width:8.8px;height:70px;border-radius:4.4px;background:#3c3c3c"></div>
<div class="t" style="left:502px;top:66.0px;font-size:7.3px;font-weight:normal;color:#e6e6e6;letter-spacing:-0.05px">Div</div>
<div class="t" style="left:502px;top:83.75px;font-size:7.3px;font-weight:normal;color:#e6e6e6;letter-spacing:-0.05px">Image</div>
<div class="t" style="left:502px;top:101.5px;font-size:7.3px;font-weight:normal;color:#e6e6e6;letter-spacing:-0.05px">Paragraph</div>
<div class="t" style="left:502px;top:119.25px;font-size:7.3px;font-weight:normal;color:#e6e6e6;letter-spacing:-0.05px">Heading</div>
<div class="t" style="left:502px;top:137.0px;font-size:7.3px;font-weight:normal;color:#e6e6e6;letter-spacing:-0.05px">Table</div>
<div class="t" style="left:502px;top:154.75px;font-size:7.3px;font-weight:normal;color:#e6e6e6;letter-spacing:-0.05px">Figure</div>
<div class="t" style="left:502px;top:172.5px;font-size:7.3px;font-weight:normal;color:#e6e6e6;letter-spacing:-0.05px">Unordered List</div>
<div class="t" style="left:502px;top:190.25px;font-size:7.3px;font-weight:normal;color:#e6e6e6;letter-spacing:-0.05px">Ordered List</div>
<div class="t" style="left:502px;top:208.0px;font-size:7.3px;font-weight:normal;color:#e6e6e6;letter-spacing:-0.05px">List Item</div>
<div class="t" style="left:502px;top:225.75px;font-size:7.3px;font-weight:normal;color:#e6e6e6;letter-spacing:-0.05px">Hyperlink</div>
<svg class="a" style="left:481px;top:65px;" width="10" height="9" viewBox="0 0 10 9"><rect x="0.6" y="0.6" width="8.8" height="7.9" fill="none" stroke="#cfcfcf" stroke-width="1"/><path d="M3.9 2.6 L2.3 4.55 L3.9 6.5 M6.1 2.6 L7.7 4.55 L6.1 6.5" stroke="#e6e6e6" stroke-width="1.1" fill="none"/></svg>
<svg class="a" style="left:481px;top:83.5px;" width="10" height="8" viewBox="0 0 10 8"><rect x="0.6" y="0.6" width="8.8" height="6.9" fill="none" stroke="#cfcfcf" stroke-width="1"/><path d="M0.8 7.2 V6 L3.2 3.8 L5 5.2 L6.5 4.2 L9.2 6 V7.2 Z" fill="#e0e0e0"/><rect x="0.8" y="0.8" width="8.4" height="1.3" fill="#cfcfcf"/><rect x="6" y="2.2" width="2" height="0.8" fill="#bbb"/></svg>
<svg class="a" style="left:481px;top:100.5px;" width="11" height="8" viewBox="0 0 11 8"><path d="M1.6 0.6 H7.3 L10.2 4 L7.3 7.4 H1.6 Q0.6 7.4 0.6 6.4 V1.6 Q0.6 0.6 1.6 0.6 Z" fill="none" stroke="#cfcfcf" stroke-width="0.9"/><path d="M3.3 6.3 V1.8 H5.2 A1.1 1.1 0 0 1 5.2 4.1 H3.3" stroke="#e6e6e6" stroke-width="0.95" fill="none"/></svg>
<svg class="a" style="left:481px;top:118.5px;" width="11" height="8" viewBox="0 0 11 8"><path d="M1.6 0.6 H7.3 L10.2 4 L7.3 7.4 H1.6 Q0.6 7.4 0.6 6.4 V1.6 Q0.6 0.6 1.6 0.6 Z" fill="none" stroke="#cfcfcf" stroke-width="0.9"/><path d="M2.3 2 V6 M4.6 2 V6 M2.3 4 H4.6 M6.1 2.5 L6.9 2 V6" stroke="#e6e6e6" stroke-width="0.8" fill="none"/></svg>
<svg class="a" style="left:496px;top:121.5px;" width="4" height="3" viewBox="0 0 4 3"><path d="M0 0 H4 L2 2.5 Z" fill="#999"/></svg>
<svg class="a" style="left:482px;top:135.5px;" width="9" height="11" viewBox="0 0 9 11"><rect x="0.5" y="0.5" width="8" height="10" fill="none" stroke="#ccc" stroke-width="0.9"/><path d="M0.5 2.6 H8.5 M0.5 4.6 H8.5 M0.5 6.6 H8.5 M0.5 8.6 H8.5 M4.5 2.6 V10.5" stroke="#ccc" stroke-width="0.7"/></svg>
<svg class="a" style="left:481px;top:154px;" width="10" height="8" viewBox="0 0 10 8"><rect x="0.5" y="0.5" width="9" height="7" fill="none" stroke="#ccc" stroke-width="0.9"/><path d="M1.5 6.5 L3 4 L4.5 5.5 L5 6.5 Z" fill="#ccc"/><rect x="6" y="3" width="2.5" height="0.8" fill="#ccc"/><rect x="6" y="5" width="2.5" height="0.8" fill="#ccc"/><rect x="1" y="1" width="8" height="1.3" fill="#ccc"/></svg>
<div class="t" style="left:482.5px;top:172.5px;font-size:8.5px;font-weight:bold;color:#e6e6e6;letter-spacing:0px">ul</div>
<div class="t" style="left:482.5px;top:190px;font-size:8.5px;font-weight:bold;color:#e6e6e6;letter-spacing:0px">ol</div>
<div class="t" style="left:483px;top:207.8px;font-size:8.5px;font-weight:bold;color:#e6e6e6;letter-spacing:2px">li</div>
<svg class="a" style="left:483px;top:224.5px;" width="6" height="11" viewBox="0 0 6 11"><path d="M1.2 4.5 V2.5 A1.8 1.8 0 0 1 4.8 2.5 V4.5 M1.2 6 V8 A1.8 1.8 0 0 0 4.8 8 V6 M3 3.5 V7" stroke="#ddd" stroke-width="0.9" fill="none"/></svg>
<div class="a" style="left:474px;top:247px;width:176px;height:1px;background:#2a2a2a"></div>
<svg class="a" style="left:481px;top:261px;" width="11" height="10" viewBox="0 0 11 10"><rect x="0.5" y="0.5" width="9.5" height="9" fill="none" stroke="#ccc" stroke-width="0.9"/><path d="M0.5 2.5 H10" stroke="#ccc" stroke-width="0.8"/></svg>
<div class="t" style="left:502px;top:261px;font-size:7.3px;font-weight:normal;color:#e6e6e6;">Header</div>
<div class="a" style="left:474px;top:272px;width:186px;height:3px;background:#232323"></div>
<div class="a" style="left:474px;top:275px;width:186px;height:11px;background:#282828"></div>
<div class="a" style="left:474px;top:275px;width:28.5px;height:11px;background:#2a2a2a"></div>
<div class="a" style="left:502.5px;top:275px;width:1px;height:11px;background:#232323"></div>
<div class="a" style="left:503.5px;top:275px;width:35px;height:11px;background:#2a2a2a"></div>
<div class="a" style="left:538px;top:275px;width:1px;height:11px;background:#232323"></div>
<div class="a" style="left:539px;top:275px;width:22px;height:11px;background:#333"></div>
<div class="t" style="left:477.8px;top:277px;font-size:7px;font-weight:normal;color:#bdbdbd;letter-spacing:-0.1px">Assets</div>
<div class="t" style="left:506.5px;top:277px;font-size:7px;font-weight:normal;color:#bdbdbd;letter-spacing:-0.1px">Snippets</div>
<div class="t" style="left:543px;top:277px;font-size:7px;font-weight:bold;color:#f2f2f2;letter-spacing:-0.1px">DOM</div>
<svg class="a" style="left:649px;top:278.5px;" width="7" height="5" viewBox="0 0 7 5"><rect x="0" y="0" width="7" height="5" fill="#5e5e5e"/><rect x="0" y="1.5" width="7" height="0.5" fill="#444"/><rect x="0" y="3.2" width="7" height="0.5" fill="#444"/></svg>
<div class="a" style="left:474px;top:286px;width:186px;height:209px;background:#333"></div>
<div class="a" style="left:650px;top:286px;width:10px;height:209px;background:#2b2b2b"></div>
<div class="a" style="left:652px;top:325px;width:6px;height:120px;border-radius:3px;background:#3e3e3e"></div>
<div class="a" style="left:474px;top:292.5px;width:176px;height:1px;background:#303030"></div>
<div class="a" style="left:474px;top:307.2px;width:176px;height:1px;background:#303030"></div>
<div class="a" style="left:474px;top:321.9px;width:176px;height:1px;background:#303030"></div>
<div class="a" style="left:474px;top:336.6px;width:176px;height:1px;background:#303030"></div>
<div class="a" style="left:474px;top:351.3px;width:176px;height:1px;background:#303030"></div>
<div class="a" style="left:474px;top:366.0px;width:176px;height:1px;background:#303030"></div>
<div class="a" style="left:474px;top:380.7px;width:176px;height:1px;background:#303030"></div>
<div class="a" style="left:474px;top:395.4px;width:176px;height:1px;background:#303030"></div>
<div class="a" style="left:474px;top:410.1px;width:176px;height:1px;background:#303030"></div>
<div class="a" style="left:474px;top:424.8px;width:176px;height:1px;background:#303030"></div>
<div class="a" style="left:474px;top:439.5px;width:176px;height:1px;background:#303030"></div>
<div class="a" style="left:474px;top:454.2px;width:176px;height:1px;background:#303030"></div>
<div class="a" style="left:474px;top:468.9px;width:176px;height:1px;background:#303030"></div>
<div class="a" style="left:474px;top:483.6px;width:176px;height:1px;background:#303030"></div>
<div class="a" style="left:474px;top:424px;width:177px;height:13.8px;background:#2c4a6b"></div>
<svg class="a" style="left:476px;top:426px;" width="10" height="10" viewBox="0 0 10 10"><path d="M4.5 0.5 V8.5 M0.5 4.5 H8.5" stroke="#fff" stroke-width="1.4"/><rect x="7.3" y="7" width="1" height="1" fill="#fff"/></svg>
<div class="a" style="left:0;top:0;width:660px;height:495px;clip-path:inset(286px 0 0 474px)">
<svg class="a" style="left:523.45px;top:278.5px;" width="34" height="13" viewBox="0 0 34 13"><path d="M0.5 0.5 H27 L30.5 5.0 L27 9.5 H0.5 Z" fill="none" stroke="#e0e0e0" stroke-width="0.9"/><path d="M1.5 11 H27.5 L32 7.0" stroke="#e0e0e0" stroke-width="0.8" fill="none"/></svg>
<div class="t" style="left:526.45px;top:280.1px;font-size:7.6px;font-weight:normal;color:#e8e8e8;letter-spacing:-0.1px">section</div>
<svg class="a" style="left:514.45px;top:296.5px;" width="5" height="6" viewBox="0 0 5 6"><path d="M1 0.8 L3.2 3 L1 5.2" stroke="#aaa" stroke-width="0.8" fill="none"/></svg>
<svg class="a" style="left:523.45px;top:294.5px;" width="34" height="13" viewBox="0 0 34 13"><path d="M0.5 0.5 H27 L30.5 5.0 L27 9.5 H0.5 Z" fill="none" stroke="#e0e0e0" stroke-width="0.9"/><path d="M1.5 11 H27.5 L32 7.0" stroke="#e0e0e0" stroke-width="0.8" fill="none"/></svg>
<div class="t" style="left:526.45px;top:296.1px;font-size:7.6px;font-weight:normal;color:#e8e8e8;letter-spacing:-0.1px">section</div>
<div class="t" style="left:557.45px;top:296.3px;font-size:7.5px;font-weight:normal;color:#e8e8e8;letter-spacing:-0.05px">#offer</div>
<svg class="a" style="left:513.95px;top:312.0px;" width="6" height="5" viewBox="0 0 6 5"><path d="M0.8 1 L3 3.2 L5.2 1" stroke="#aaa" stroke-width="0.8" fill="none"/></svg>
<svg class="a" style="left:523.45px;top:309.5px;" width="20.5" height="13" viewBox="0 0 20.5 13"><path d="M0.5 0.5 H13.5 L17.0 5.0 L13.5 9.5 H0.5 Z" fill="none" stroke="#e0e0e0" stroke-width="0.9"/></svg>
<div class="t" style="left:526.45px;top:311.1px;font-size:7.6px;font-weight:normal;color:#e8e8e8;letter-spacing:-0.1px">div</div>
<div class="t" style="left:543.95px;top:311.3px;font-size:7.5px;font-weight:normal;color:#e8e8e8;letter-spacing:-0.05px">#content</div>
<svg class="a" style="left:523.9px;top:326.2px;" width="5" height="6" viewBox="0 0 5 6"><path d="M1 0.8 L3.2 3 L1 5.2" stroke="#aaa" stroke-width="0.8" fill="none"/></svg>
<svg class="a" style="left:532.9px;top:324.2px;" width="34" height="13" viewBox="0 0 34 13"><path d="M0.5 0.5 H27 L30.5 5.0 L27 9.5 H0.5 Z" fill="none" stroke="#e0e0e0" stroke-width="0.9"/><path d="M1.5 11 H27.5 L32 7.0" stroke="#e0e0e0" stroke-width="0.8" fill="none"/></svg>
<div class="t" style="left:535.9px;top:325.8px;font-size:7.6px;font-weight:normal;color:#e8e8e8;letter-spacing:-0.1px">section</div>
<div class="t" style="left:566.9px;top:326.0px;font-size:7.5px;font-weight:normal;color:#e8e8e8;letter-spacing:-0.05px">.sidebar</div>
<svg class="a" style="left:523.4px;top:341.4px;" width="6" height="5" viewBox="0 0 6 5"><path d="M0.8 1 L3 3.2 L5.2 1" stroke="#aaa" stroke-width="0.8" fill="none"/></svg>
<svg class="a" style="left:532.9px;top:338.9px;" width="34" height="13" viewBox="0 0 34 13"><path d="M0.5 0.5 H27 L30.5 5.0 L27 9.5 H0.5 Z" fill="none" stroke="#e0e0e0" stroke-width="0.9"/></svg>
<div class="t" style="left:535.9px;top:340.5px;font-size:7.6px;font-weight:normal;color:#e8e8e8;letter-spacing:-0.1px">section</div>
<div class="t" style="left:566.9px;top:340.7px;font-size:7.5px;font-weight:normal;color:#e8e8e8;letter-spacing:-0.05px">.mainContent</div>
<svg class="a" style="left:532.85px;top:356.1px;" width="6" height="5" viewBox="0 0 6 5"><path d="M0.8 1 L3 3.2 L5.2 1" stroke="#aaa" stroke-width="0.8" fill="none"/></svg>
<svg class="a" style="left:542.35px;top:353.6px;" width="20.5" height="13" viewBox="0 0 20.5 13"><path d="M0.5 0.5 H13.5 L17.0 5.0 L13.5 9.5 H0.5 Z" fill="none" stroke="#e0e0e0" stroke-width="0.9"/></svg>
<div class="t" style="left:545.35px;top:355.20000000000005px;font-size:7.6px;font-weight:normal;color:#e8e8e8;letter-spacing:-0.1px">div</div>
<div class="t" style="left:562.85px;top:355.40000000000003px;font-size:7.5px;font-weight:normal;color:#e8e8e8;letter-spacing:-0.05px">.productRow</div>
<svg class="a" style="left:542.8px;top:370.3px;" width="5" height="6" viewBox="0 0 5 6"><path d="M1 0.8 L3.2 3 L1 5.2" stroke="#aaa" stroke-width="0.8" fill="none"/></svg>
<svg class="a" style="left:551.8px;top:368.3px;" width="30" height="13" viewBox="0 0 30 13"><path d="M0.5 0.5 H23 L26.5 5.0 L23 9.5 H0.5 Z" fill="none" stroke="#e0e0e0" stroke-width="0.9"/><path d="M1.5 11 H23.5 L28 7.0" stroke="#e0e0e0" stroke-width="0.8" fill="none"/></svg>
<div class="t" style="left:554.8px;top:369.90000000000003px;font-size:7.6px;font-weight:normal;color:#e8e8e8;letter-spacing:-0.1px">article</div>
<div class="t" style="left:581.8px;top:370.1px;font-size:7.5px;font-weight:normal;color:#e8e8e8;letter-spacing:-0.05px">.productInfo</div>
<svg class="a" style="left:542.8px;top:385.0px;" width="5" height="6" viewBox="0 0 5 6"><path d="M1 0.8 L3.2 3 L1 5.2" stroke="#aaa" stroke-width="0.8" fill="none"/></svg>
<svg class="a" style="left:551.8px;top:383.0px;" width="30" height="13" viewBox="0 0 30 13"><path d="M0.5 0.5 H23 L26.5 5.0 L23 9.5 H0.5 Z" fill="none" stroke="#e0e0e0" stroke-width="0.9"/><path d="M1.5 11 H23.5 L28 7.0" stroke="#e0e0e0" stroke-width="0.8" fill="none"/></svg>
<div class="t" style="left:554.8px;top:384.6px;font-size:7.6px;font-weight:normal;color:#e8e8e8;letter-spacing:-0.1px">article</div>
<div class="t" style="left:581.8px;top:384.8px;font-size:7.5px;font-weight:normal;color:#e8e8e8;letter-spacing:-0.05px">.productInfo</div>
<svg class="a" style="left:542.3px;top:400.2px;" width="6" height="5" viewBox="0 0 6 5"><path d="M0.8 1 L3 3.2 L5.2 1" stroke="#aaa" stroke-width="0.8" fill="none"/></svg>
<svg class="a" style="left:551.8px;top:397.7px;" width="30" height="13" viewBox="0 0 30 13"><path d="M0.5 0.5 H23 L26.5 5.0 L23 9.5 H0.5 Z" fill="none" stroke="#e0e0e0" stroke-width="0.9"/></svg>
<div class="t" style="left:554.8px;top:399.3px;font-size:7.6px;font-weight:normal;color:#e8e8e8;letter-spacing:-0.1px">article</div>
<div class="t" style="left:581.8px;top:399.5px;font-size:7.5px;font-weight:normal;color:#e8e8e8;letter-spacing:-0.05px">.productInfo</div>
<svg class="a" style="left:551.75px;top:414.9px;" width="6" height="5" viewBox="0 0 6 5"><path d="M0.8 1 L3 3.2 L5.2 1" stroke="#aaa" stroke-width="0.8" fill="none"/></svg>
<svg class="a" style="left:561.25px;top:412.4px;" width="20.5" height="13" viewBox="0 0 20.5 13"><path d="M0.5 0.5 H13.5 L17.0 5.0 L13.5 9.5 H0.5 Z" fill="none" stroke="#e0e0e0" stroke-width="0.9"/></svg>
<div class="t" style="left:564.25px;top:414.0px;font-size:7.6px;font-weight:normal;color:#e8e8e8;letter-spacing:-0.1px">div</div>
<svg class="a" style="left:570.7px;top:426.1px;" width="23" height="13" viewBox="0 0 23 13"><path d="M0.5 0.5 H16 L19.5 5.0 L16 9.5 H0.5 Z" fill="none" stroke="#e0e0e0" stroke-width="0.9"/></svg>
<div class="t" style="left:573.7px;top:427.70000000000005px;font-size:7.6px;font-weight:normal;color:#e8e8e8;letter-spacing:-0.1px">img</div>
<svg class="a" style="left:561.25px;top:440.8px;" width="15" height="13" viewBox="0 0 15 13"><path d="M0.5 0.5 H8 L11.5 5.0 L8 9.5 H0.5 Z" fill="none" stroke="#e0e0e0" stroke-width="0.9"/></svg>
<div class="t" style="left:564.25px;top:442.40000000000003px;font-size:7.6px;font-weight:normal;color:#e8e8e8;letter-spacing:-0.1px">p</div>
<div class="t" style="left:576.25px;top:442.6px;font-size:7.5px;font-weight:normal;color:#e8e8e8;letter-spacing:-0.05px">.price</div>
<svg class="a" style="left:561.25px;top:455.5px;" width="15" height="13" viewBox="0 0 15 13"><path d="M0.5 0.5 H8 L11.5 5.0 L8 9.5 H0.5 Z" fill="none" stroke="#e0e0e0" stroke-width="0.9"/></svg>
<div class="t" style="left:564.25px;top:457.1px;font-size:7.6px;font-weight:normal;color:#e8e8e8;letter-spacing:-0.1px">p</div>
<div class="t" style="left:576.25px;top:457.3px;font-size:7.5px;font-weight:normal;color:#e8e8e8;letter-spacing:-0.05px">.productContent</div>
<svg class="a" style="left:561.25px;top:470.2px;" width="28" height="13" viewBox="0 0 28 13"><path d="M0.5 0.5 H21 L24.5 5.0 L21 9.5 H0.5 Z" fill="none" stroke="#e0e0e0" stroke-width="0.9"/></svg>
<div class="t" style="left:564.25px;top:471.8px;font-size:7.6px;font-weight:normal;color:#e8e8e8;letter-spacing:-0.1px">input</div>
<div class="t" style="left:589.25px;top:472.0px;font-size:7.5px;font-weight:normal;color:#e8e8e8;letter-spacing:-0.05px">.buyButton</div>
<svg class="a" style="left:542.35px;top:484.9px;" width="20.5" height="13" viewBox="0 0 20.5 13"><path d="M0.5 0.5 H13.5 L17.0 5.0 L13.5 9.5 H0.5 Z" fill="none" stroke="#e0e0e0" stroke-width="0.9"/></svg>
<div class="t" style="left:545.35px;top:486.5px;font-size:7.6px;font-weight:normal;color:#e8e8e8;letter-spacing:-0.1px">div</div>
</div>
<div class="a" style="left:474px;top:486px;width:176px;height:9px;background:#333"></div>
<div class="a" style="left:476px;top:487px;width:147px;height:6px;border-radius:3px;background:#3c3c3c"></div>
</body></html>
